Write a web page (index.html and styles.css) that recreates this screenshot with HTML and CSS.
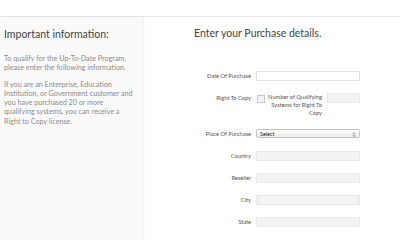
FILE: index.html
```html
<!DOCTYPE html>
<html lang="en">
<head>
    <meta charset="UTF-8">
    <title>Up-To-Date Program</title>
    <link rel="stylesheet" href="styles.css">
</head>
<body>

    <div class="topbar"></div>

    <div class="page">
        <aside class="info">
            <h2>Important information:</h2>
            <p>To qualify for the Up-To-Date Program,<br>please enter the following information.</p>
            <p>If you are an Enterprise, Education<br>Institution, or Government customer and<br>you have purchased 20 or more<br>qualifying systems, you can receive a<br>Right to Copy license.</p>
        </aside>

        <main class="purchase">
            <h1>Enter your Purchase details.</h1>

            <form class="form">
                <label class="label">Date Of Purchase</label>
                <div class="field"><input type="text" class="input"></div>

                <label class="label">Right To Copy</label>
                <div class="field copy">
                    <span class="check"></span>
                    <span class="copy-text">Number of Qualifying Systems for Right To Copy</span>
                    <input type="text" class="input small" disabled>
                </div>

                <label class="label">Place Of Purchase</label>
                <div class="field">
                    <div class="select"><span>Select</span><span class="arrows">&#8597;</span></div>
                </div>

                <label class="label">Country</label>
                <div class="field"><input type="text" class="input" disabled></div>

                <label class="label">Reseller</label>
                <div class="field"><input type="text" class="input" disabled></div>

                <label class="label">City</label>
                <div class="field"><input type="text" class="input" disabled></div>

                <label class="label">State</label>
                <div class="field"><input type="text" class="input" disabled></div>
            </form>
        </main>
    </div>

</body>
</html>
```

FILE: styles.css
```css
body {
    margin: 0;
    font-family: Lato, 'Open Sans', sans-serif;
    background-color: #fff;
    color: #555;
    height: 240px;
    overflow: hidden;
}
.topbar {
    height: 16px;
    border-bottom: 1px solid #e8e8e8;
}
.page {
    display: flex;
    height: 223px;
}
.info {
    width: 143px;
    background-color: #fafafa;
    box-shadow: 1px 0 2px rgba(0, 0, 0, 0.05);
    border-right: 1px solid #f0f0f0;
    padding: 11px 4px 0 4px;
    box-sizing: border-box;
}
.info h2 {
    font-size: 10.5px;
    font-weight: 400;
    color: #444;
    margin: 0 0 14px 0;
}
.info p {
    font-size: 7.2px;
    line-height: 9.3px;
    color: #8c8c8c;
    margin: 0 0 7px 0;
    white-space: nowrap;
}
.purchase {
    flex: 1;
    padding: 10px 0 0 51px;
}
.purchase h1 {
    font-size: 10.5px;
    font-weight: 400;
    color: #444;
    margin: 0 0 32px 0;
}
.form {
    display: grid;
    grid-template-columns: 57px 104px;
    column-gap: 5px;
    row-gap: 12px;
    align-items: start;
}
.label {
    font-size: 5.7px;
    color: #555;
    text-align: right;
    line-height: 10px;
    white-space: nowrap;
}
.field {
    display: flex;
}
.input {
    width: 104px;
    height: 10px;
    margin: 0;
    padding: 0;
    border: 1px solid #e0e0e0;
    background-color: #fff;
    box-sizing: border-box;
}
.input:disabled {
    background-color: #f3f3f3;
    border-color: #e8e8e8;
}
.input.small {
    width: 33px;
    margin-left: 5px;
}
.copy {
    align-items: flex-start;
}
.check {
    width: 6px;
    height: 6px;
    margin: 2px 0 0 1px;
    border: 1px solid #c8c8c8;
    background-color: #f4f4f4;
    flex-shrink: 0;
}
.copy-text {
    width: 58px;
    font-size: 5.7px;
    line-height: 8px;
    text-align: right;
    color: #555;
}
.select {
    width: 104px;
    height: 9px;
    box-sizing: border-box;
    border: 1px solid #c4c4c4;
    border-radius: 2px;
    background: linear-gradient(#fff, #ececec);
    display: flex;
    justify-content: space-between;
    align-items: center;
    padding: 0 3px;
    font-size: 5.4px;
    color: #222;
}
.arrows {
    font-size: 5px;
    color: #666;
}
```
